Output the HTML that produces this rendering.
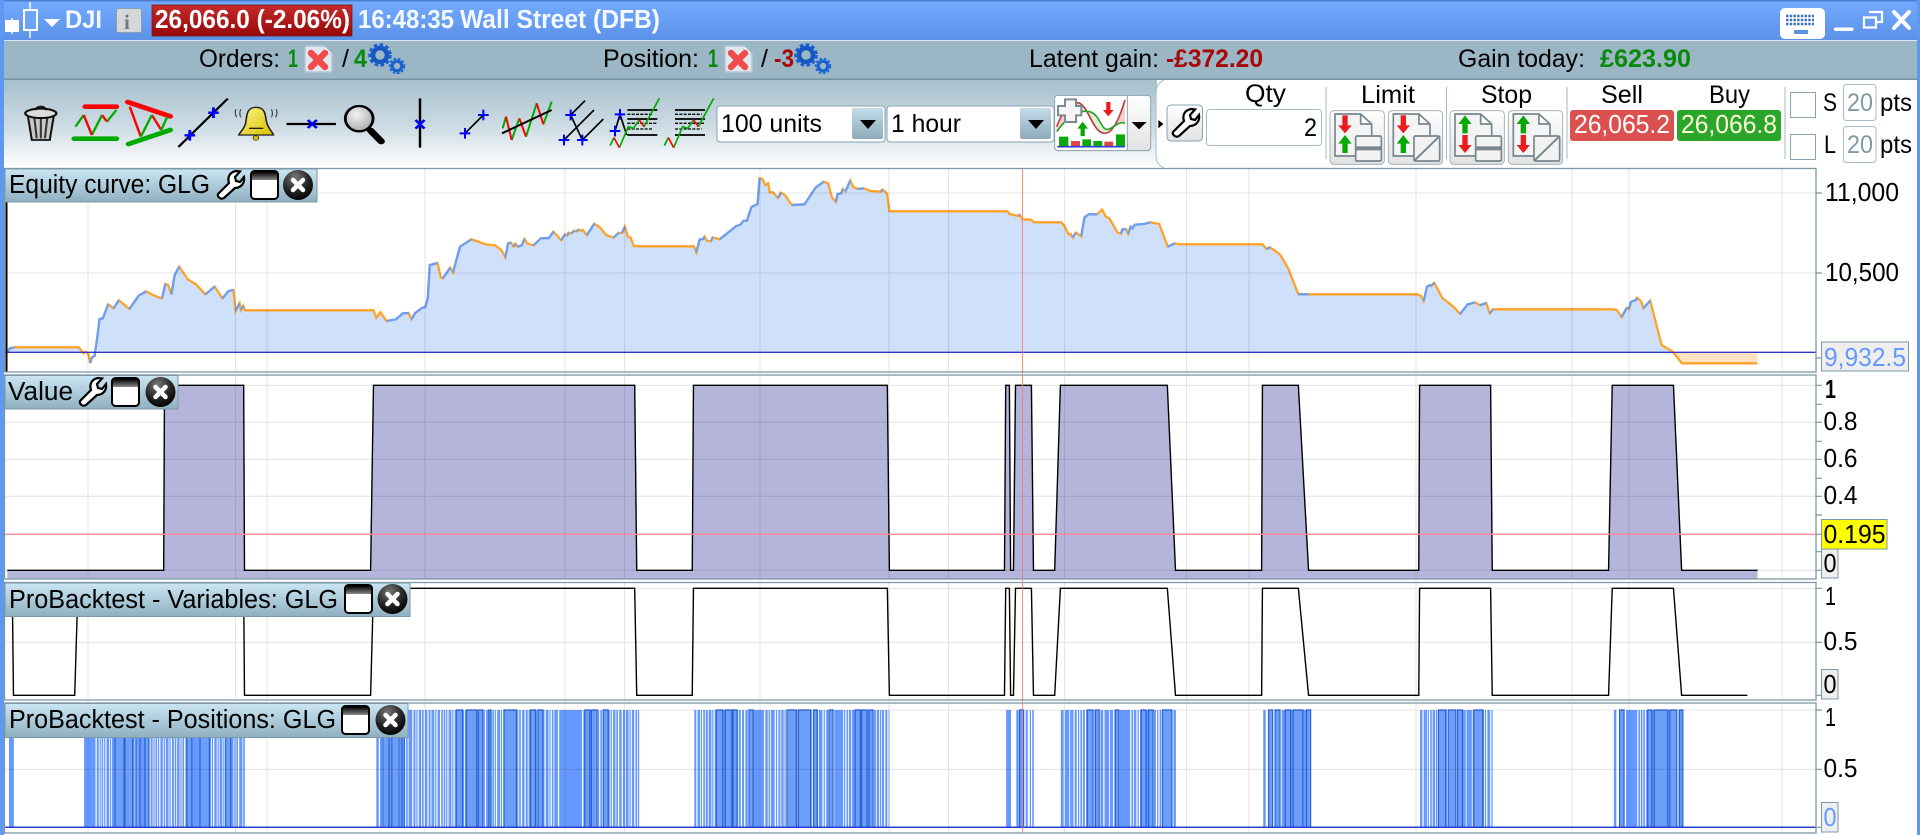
<!DOCTYPE html>
<html><head><meta charset="utf-8"><title>DJI</title>
<style>html,body{margin:0;padding:0;background:#fff;width:1920px;height:835px;overflow:hidden}svg{display:block}text{font-family:"Liberation Sans",sans-serif;fill:#000}.n{vector-effect:non-scaling-stroke;fill:none}</style></head><body>
<svg xmlns="http://www.w3.org/2000/svg" width="1920" height="835" viewBox="0 0 1920 835">
<defs>
<linearGradient id="tb" x1="0" y1="0" x2="0" y2="1"><stop offset="0" stop-color="#74abff"/><stop offset="1" stop-color="#5b92e8"/></linearGradient>
<linearGradient id="tool" x1="0" y1="0" x2="0" y2="1"><stop offset="0" stop-color="#a6c0cd"/><stop offset=".55" stop-color="#cfdde4"/><stop offset="1" stop-color="#fff"/></linearGradient>
<linearGradient id="lab" x1="0" y1="0" x2="0" y2="1"><stop offset="0" stop-color="#cbe6f3"/><stop offset="1" stop-color="#8fb0c1"/></linearGradient>
<linearGradient id="red" x1="0" y1="0" x2="0" y2="1"><stop offset="0" stop-color="#c82a2a"/><stop offset="1" stop-color="#960808"/></linearGradient>
<linearGradient id="btn" x1="0" y1="0" x2="0" y2="1"><stop offset="0" stop-color="#fff"/><stop offset="1" stop-color="#e2e2e2"/></linearGradient>
<linearGradient id="ddb" x1="0" y1="0" x2="0" y2="1"><stop offset="0" stop-color="#c2dcea"/><stop offset="1" stop-color="#8fabba"/></linearGradient>
<linearGradient id="wt" x1="0" y1="0" x2="0" y2="1"><stop offset="0" stop-color="#000"/><stop offset="1" stop-color="#888"/></linearGradient>
<radialGradient id="xg" cx=".4" cy=".25" r=".8"><stop offset="0" stop-color="#777"/><stop offset=".6" stop-color="#222"/><stop offset="1" stop-color="#000"/></radialGradient>
<linearGradient id="bell" x1="0" y1="0" x2="1" y2="1"><stop offset="0" stop-color="#fff48a"/><stop offset="1" stop-color="#d8c000"/></linearGradient>
<radialGradient id="lens" cx=".4" cy=".35" r=".7"><stop offset="0" stop-color="#f4f4f4"/><stop offset="1" stop-color="#a8a8a8"/></radialGradient>
<g id="win"><rect x="1" y="1" width="27" height="28" rx="3.5" fill="#fff" stroke="#000" stroke-width="2"/><rect x="2" y="2" width="25" height="8" fill="url(#wt)"/></g>
<g id="xc"><ellipse cx="15" cy="15" rx="15" ry="15" fill="url(#xg)"/><path d="M10 10L20 20M20 10L10 20" stroke="#fff" stroke-width="4.5" stroke-linecap="round"/></g>
<path id="wr" d="M3 24L14 13C12 7 15 2 21 1L25 1.500L20 7L21 11L25 12L29 7C30 13 26 18 20 18L9 28C6 30 2 27 3 24Z" fill="#fff" stroke="#000" stroke-width="2.200"/>
<g id="gear"><circle cx="11" cy="11" r="7" fill="none" stroke="#1556c0" stroke-width="4.500"/><circle cx="11" cy="11" r="10" fill="none" stroke="#1a5fcc" stroke-width="3.500" stroke-dasharray="3.500 2.300"/><circle cx="28" cy="22" r="4.800" fill="none" stroke="#1a62d0" stroke-width="3.200"/><circle cx="28" cy="22" r="7" fill="none" stroke="#1f6ad8" stroke-width="2.500" stroke-dasharray="2.500 1.700"/></g>
<g id="docx"><path d="M1 2.500Q1 1 2.500 1H20L28 9V25.500Q28 27 26.500 27H2.500Q1 27 1 25.500Z" fill="#e0e8ee" stroke="#b4c6d4" stroke-width="1.500"/><path d="M20 1V9H28" fill="#fff" stroke="#b4c6d4"/><path d="M7 8L21 22M21 8L7 22" stroke="#f24a4a" stroke-width="6.500" stroke-linecap="round"/></g>
<path id="dn" d="M-8 0H8V30H20L0 54L-20 30H-8Z" fill="#ec1c1c"/>
<path id="up" d="M0 0L20 26H8V54H-8V26H-20Z" fill="#06a806"/>
<g id="doc"><rect x="30" y="32" width="163" height="161" rx="12" fill="url(#btn)" stroke="#9aa6ac" stroke-width="2.500"/><path d="M106 168H45V42H122L155 72V106M122 42V72H155" fill="#f4f4f4" stroke="#77858c" stroke-width="5"/></g>
<g id="box1"><rect x="107" y="108" width="77" height="75" rx="4" fill="#f2f2f2" stroke="#77858c" stroke-width="5"/><path d="M107 145H184" stroke="#77858c" stroke-width="12"/></g>
<g id="box2"><rect x="282" y="108" width="77" height="75" rx="4" fill="#f2f2f2" stroke="#77858c" stroke-width="5"/><path d="M284 181L357 110" stroke="#77858c" stroke-width="6"/></g>
<path id="pl" d="M-16 0H16M0-16V16" stroke="#00f" stroke-width="6" fill="none"/>
</defs>

<rect width="1920" height="835" fill="#fff"/>
<!-- frame -->
<rect x="0" y="0" width="1920" height="40" fill="url(#tb)"/>
<rect x="0" y="0" width="1920" height="1.500" fill="#4b7fd0"/>
<rect x="0" y="0" width="4" height="835" fill="#5f98f2"/>
<rect x="1917" y="0" width="3" height="835" fill="#5f98f2"/>
<rect x="4" y="40" width="1913" height="1" fill="#dbe8f4"/>
<rect x="4" y="41" width="1913" height="38" fill="#9bb6c4"/>
<rect x="4" y="78.500" width="1913" height="1.500" fill="#76939f"/>
<rect x="4" y="80" width="1153" height="88" fill="url(#tool)"/>
<path d="M1164 80C1156 84 1156 90 1156 96V152C1156 160 1156 164 1164 168H1917V80Z" fill="#fff"/>
<path d="M1164 80C1156 84 1156 90 1156 96V152C1156 160 1156 164 1164 168" fill="none" stroke="#a6bcc8"/>

<!-- title bar -->
<path d="M12 18V34" stroke="#fff" stroke-width="1.500"/><rect x="5" y="20" width="14" height="12" fill="#fff"/>
<path d="M30 2V38" stroke="#fff" stroke-width="1.500"/><rect x="24" y="10" width="13" height="20" fill="#6ea4f8" stroke="#fff" stroke-width="2"/>
<path d="M44 19H60L52 27Z" fill="#fff"/>
<text x="65" y="28" font-size="25" font-weight="bold" textLength="37" lengthAdjust="spacingAndGlyphs" style="fill:#f4f8ff">DJI</text>
<rect x="116.500" y="8.500" width="25" height="24" rx="2" fill="#d4d8da" stroke="#8aa0ae"/><text x="124" y="29" font-size="21" font-weight="bold" style="fill:#777;font-family:'Liberation Serif',serif">i</text>
<rect x="152" y="5" width="200" height="31" fill="url(#red)" stroke="#7d1a1a" stroke-width=".8"/>
<text x="155" y="28" font-size="25.500" font-weight="bold" textLength="195" lengthAdjust="spacingAndGlyphs" style="fill:#fff">26,066.0 (-2.06%)</text>
<text x="358" y="28" font-size="25.500" font-weight="bold" textLength="96" lengthAdjust="spacingAndGlyphs" style="fill:#f4f8ff">16:48:35</text>
<text x="460" y="28" font-size="25.500" font-weight="bold" textLength="200" lengthAdjust="spacingAndGlyphs" style="fill:#f4f8ff">Wall Street (DFB)</text>
<rect x="1780" y="8" width="45" height="31" rx="5" fill="#fff"/>
<path d="M1786 16h28M1786 20h28M1786 24h28" stroke="#3f72bc" stroke-width="2.600" stroke-dasharray="2.500 1.200"/><rect x="1794" y="30" width="14" height="4" fill="#5b92dd"/>
<rect x="1834" y="27.500" width="19.500" height="3.500" rx="1.500" fill="#fff"/>
<path d="M1869 12h13v10h-5M1864 17.500h12v10h-12z" fill="none" stroke="#fff" stroke-width="2.200"/>
<path d="M1894 12L1909 28M1909 12L1894 28" stroke="#fff" stroke-width="4" stroke-linecap="round"/>

<!-- orders bar -->
<g font-size="25">
<text x="199" y="67" textLength="81" lengthAdjust="spacingAndGlyphs">Orders:</text>
<text x="288" y="67" font-weight="bold" textLength="10" lengthAdjust="spacingAndGlyphs" style="fill:#0a8a0a">1</text>
<use href="#docx" x="304" y="45"/>
<text x="342" y="67">/</text>
<text x="354" y="67" font-weight="bold" textLength="13" lengthAdjust="spacingAndGlyphs" style="fill:#0a8a0a">4</text>
<use href="#gear" x="369" y="44"/>
<text x="603" y="67" textLength="96" lengthAdjust="spacingAndGlyphs">Position:</text>
<text x="708" y="67" font-weight="bold" textLength="10" lengthAdjust="spacingAndGlyphs" style="fill:#0a8a0a">1</text>
<use href="#docx" x="724" y="45"/>
<text x="761" y="67">/</text>
<text x="774" y="67" font-weight="bold" textLength="20" lengthAdjust="spacingAndGlyphs" style="fill:#a80808">-3</text>
<use href="#gear" x="795" y="44"/>
<text x="1029" y="67" textLength="130" lengthAdjust="spacingAndGlyphs">Latent gain:</text>
<text x="1166" y="67" font-weight="bold" textLength="97" lengthAdjust="spacingAndGlyphs" style="fill:#a80808">-£372.20</text>
<text x="1458" y="67" textLength="127" lengthAdjust="spacingAndGlyphs">Gain today:</text>
<text x="1600" y="67" font-weight="bold" textLength="91" lengthAdjust="spacingAndGlyphs" style="fill:#0a8a0a">£623.90</text>
</g>

<!-- left toolbar icons in zoom coords -->
<g transform="scale(.40816 .33333)">
<path d="M68 345L78 420H122L132 345Z" fill="#c8c8c8" stroke="#111" stroke-width="5"/>
<path d="M84 352L90 415M100 352V415M116 352L110 415" stroke="#333" stroke-width="5"/>
<ellipse cx="100" cy="340" rx="38" ry="14" fill="#ddd" stroke="#111" stroke-width="6"/>
<path d="M85 330Q100 310 115 330" fill="none" stroke="#111" stroke-width="6"/>
<path d="M209 320H285" stroke="#f00" stroke-width="14" stroke-linecap="round"/>
<path d="M182 416H285" stroke="#0a0" stroke-width="14" stroke-linecap="round"/>
<path d="M185 380L205 345M225 405L250 345M262 365L285 330" stroke="#0a0" stroke-width="6" fill="none"/>
<path d="M205 345L225 405M250 345L262 365" stroke="#f00" stroke-width="6" fill="none"/>
<path d="M313 306L417 349" stroke="#f00" stroke-width="14" stroke-linecap="round"/>
<path d="M315 432L417 390" stroke="#0a0" stroke-width="14" stroke-linecap="round"/>
<path d="M318 320L345 410M372 345L395 390" stroke="#f00" stroke-width="6" fill="none"/>
<path d="M345 410L372 345M395 390L410 350" stroke="#0a0" stroke-width="6" fill="none"/>
<path d="M437 441L558 296" stroke="#000" stroke-width="6"/>
<path d="M510 338H536M523 322V354M452 406H478M465 390V422" stroke="#00f" stroke-width="7"/>
<path d="M627 322C650 322 650 345 652 360C655 385 668 395 670 405H585C588 395 602 385 603 360C605 345 605 322 627 322Z" fill="url(#bell)" stroke="#222" stroke-width="4"/>
<path d="M610 385H645" stroke="#222" stroke-width="4"/><ellipse cx="627" cy="414" rx="7" ry="7" fill="#d8c000" stroke="#333" stroke-width="2"/>
<path d="M578 328Q574 340 580 352M590 328Q585 340 590 352M677 328Q681 340 675 352M665 328Q670 340 665 352" fill="none" stroke="#444" stroke-width="3"/>
<path d="M702 372H823" stroke="#000" stroke-width="7"/><path d="M754 360L776 384M776 360L754 384" stroke="#00f" stroke-width="7"/>
<path d="M908 392L934 424" stroke="#000" stroke-width="18" stroke-linecap="round"/>
<ellipse cx="880" cy="356" rx="34" ry="38" fill="url(#lens)" stroke="#000" stroke-width="7"/>
<path d="M1029 295V443" stroke="#000" stroke-width="6"/><path d="M1018 360L1040 386M1040 360L1018 386" stroke="#00f" stroke-width="7"/>
</g>
<g transform="translate(440 85) scale(.33333)" fill="none">
<path d="M75 145L130 90" stroke="#000" stroke-width="5"/><use href="#pl" x="75" y="145"/><use href="#pl" x="130" y="90"/>
<path d="M188 130L198 95M215 165L238 100M258 155L290 55M310 118L335 50" stroke="#0a0" stroke-width="6"/>
<path d="M198 95L215 165M238 100L258 155M290 55L310 118" stroke="#f00" stroke-width="6"/>
<path d="M186 145L335 75" stroke="#000" stroke-width="6"/>
<path d="M392 90L435 47M372 165L462 75M427 165L490 102M392 90L427 165" stroke="#000" stroke-width="5"/>
<use href="#pl" x="392" y="90"/><use href="#pl" x="372" y="165"/><use href="#pl" x="427" y="165"/>
<path d="M562 75H652M562 102H652M562 150H652M525 138L540 88L560 150" stroke="#000" stroke-width="5"/>
<path d="M562 88H640M562 115H652M562 132H640" stroke="#000" stroke-width="4" stroke-dasharray="9 4"/>
<path d="M510 182L522 158M538 188L565 125L580 130L598 105M612 125L658 40" stroke="#0a0" stroke-width="5"/>
<path d="M522 158L538 188M598 105L612 125" stroke="#f00" stroke-width="5"/>
<use href="#pl" x="540" y="88"/><use href="#pl" x="525" y="138"/>
<path d="M705 75H795M705 102H795M705 150H795" stroke="#000" stroke-width="5"/>
<path d="M705 88H785M705 115H795M705 132H785" stroke="#000" stroke-width="4" stroke-dasharray="9 4"/>
<path d="M673 182L685 158M701 188L728 125L743 130L761 105M775 125L821 40" stroke="#0a0" stroke-width="5"/>
<path d="M685 158L701 188M761 105L775 125" stroke="#f00" stroke-width="5"/>
</g>

<!-- dropdowns -->
<rect x="717" y="106" width="168" height="36" rx="3" fill="#fff" stroke="#8ba3b0"/>
<rect x="852" y="108" width="31" height="31" rx="2" fill="url(#ddb)"/><path d="M860 120H876L868 129Z" fill="#000"/>
<text x="721" y="132" font-size="25" textLength="101" lengthAdjust="spacingAndGlyphs">100 units</text>
<rect x="887" y="106" width="167" height="36" rx="3" fill="#fff" stroke="#8ba3b0"/>
<rect x="1020" y="108" width="31" height="31" rx="2" fill="url(#ddb)"/><path d="M1028 120H1044L1036 129Z" fill="#000"/>
<text x="891" y="132" font-size="25" textLength="70" lengthAdjust="spacingAndGlyphs">1 hour</text>

<!-- indicator button -->
<g transform="translate(1050 90) scale(.33333)">
<rect x="14" y="16" width="288" height="166" rx="9" fill="url(#btn)" stroke="#8ba3b0" stroke-width="3"/>
<rect x="16" y="18" width="216" height="162" rx="8" fill="#fff"/>
<path d="M232 16V182" stroke="#8ba3b0" stroke-width="3"/>
<path d="M20 110C40 60 60 30 90 40C120 60 130 130 165 130C190 130 210 80 225 30V100C215 95 205 100 190 110C160 140 160 80 120 65C90 60 60 70 20 125Z" fill="#dff0d8"/>
<path d="M20 110C40 60 60 30 90 40L100 65C80 60 50 75 20 125ZM190 110C205 100 215 95 225 100V30C210 80 200 100 190 110Z" fill="#f6cfcf"/>
<path d="M20 110C40 60 60 30 90 40C120 60 130 130 165 130C190 130 210 80 225 30" fill="none" stroke="#b84040" stroke-width="5"/>
<path d="M20 125C60 70 90 60 120 65C160 80 150 140 190 110C205 100 215 95 225 100" fill="none" stroke="#2aa02a" stroke-width="5"/>
<path d="M45 28H78V48H94V76H78V96H45V76H24V48H45Z" fill="#f6f6f6" stroke="#7b8b94" stroke-width="6"/>
<use href="#up" transform="translate(98 95) scale(.8)"/><use href="#dn" transform="translate(175 36) scale(.8)"/>
<path d="M27 140h28v28h-28zM97 148h26v20h-26zM130 153h27v15h-27zM198 133h27v35h-27z" fill="#0ca80c"/>
<path d="M63 153h27v15h-27zM163 155h27v13h-27z" fill="#e04848"/>
<path d="M22 170H225" stroke="#2a3fd8" stroke-width="5"/>
<path d="M245 96H290L267 118Z" fill="#000"/>
<path d="M325 90L340 102L325 115Z" fill="#000"/>
</g>

<!-- right panel -->
<rect x="1167" y="105" width="35.500" height="36" rx="4" fill="url(#btn)" stroke="#8ba3b0"/>
<use href="#wr" transform="translate(1170 108)"/>
<rect x="1206.500" y="109.500" width="115" height="36" rx="3" fill="#fff" stroke="#a8bac4"/>
<g stroke="#a8bac4"><path d="M1326 87V159M1446.500 87V159M1567 87V159M1785 87V159"/></g>
<g font-size="25">
<text x="1245" y="102" textLength="41" lengthAdjust="spacingAndGlyphs">Qty</text>
<text x="1304" y="136" textLength="13" lengthAdjust="spacingAndGlyphs">2</text>
<text x="1361" y="103" textLength="54" lengthAdjust="spacingAndGlyphs">Limit</text>
<text x="1481" y="103" textLength="51" lengthAdjust="spacingAndGlyphs">Stop</text>
<text x="1601" y="103" textLength="42" lengthAdjust="spacingAndGlyphs">Sell</text>
<text x="1709" y="103" textLength="41" lengthAdjust="spacingAndGlyphs">Buy</text>
</g>
<g transform="translate(1320 100) scale(.33333)">
<use href="#doc"/><use href="#box1"/><use href="#dn" transform="translate(75 46)"/><use href="#up" transform="translate(75 105)"/>
<g transform="translate(175 0)"><use href="#doc"/></g><use href="#box2"/><use href="#dn" transform="translate(250 46)"/><use href="#up" transform="translate(250 105)"/>
<g transform="translate(360 0)"><use href="#doc"/><use href="#box1"/><use href="#up" transform="translate(75 46)"/><use href="#dn" transform="translate(75 105)"/></g>
<g transform="translate(535 0)"><use href="#doc"/><use href="#box2" transform="translate(-175 0)"/><use href="#up" transform="translate(75 46)"/><use href="#dn" transform="translate(75 105)"/></g>
</g>
<rect x="1570" y="110" width="104" height="31" rx="3" fill="#dc5050"/>
<text x="1574" y="133" font-size="25.500" textLength="96" lengthAdjust="spacingAndGlyphs" style="fill:#fff">26,065.2</text>
<rect x="1677" y="110" width="104" height="31" rx="3" fill="#2aa62a"/>
<text x="1681" y="133" font-size="25.500" textLength="96" lengthAdjust="spacingAndGlyphs" style="fill:#fdfdd8">26,066.8</text>
<rect x="1790.500" y="92.500" width="25" height="25" fill="#fff" stroke="#8ba3b0"/>
<rect x="1790.500" y="134.500" width="25" height="25" fill="#fff" stroke="#8ba3b0"/>
<rect x="1843.500" y="84.500" width="32.500" height="36" rx="3" fill="#fff" stroke="#a8bac4"/>
<rect x="1843.500" y="126.500" width="32.500" height="36" rx="3" fill="#fff" stroke="#a8bac4"/>
<g font-size="25">
<text x="1823" y="111" textLength="14" lengthAdjust="spacingAndGlyphs">S</text><text x="1824" y="153" textLength="12" lengthAdjust="spacingAndGlyphs">L</text>
<text x="1847" y="111" textLength="26" lengthAdjust="spacingAndGlyphs" style="fill:#7f9aa4">20</text>
<text x="1847" y="153" textLength="26" lengthAdjust="spacingAndGlyphs" style="fill:#7f9aa4">20</text>
<text x="1880" y="111" textLength="32" lengthAdjust="spacingAndGlyphs">pts</text>
<text x="1880" y="153" textLength="32" lengthAdjust="spacingAndGlyphs">pts</text>
</g>

<!-- equity -->
<g transform="translate(0 165) scale(.40816 .33333)">
<path fill="#cfe0fb" d="M18 562L24 550L35 547L193 547L205 562H238L244 462L252 460L265 418L278 430L291 406L317 432L340 392L358 379L378 392L397 400L405 357L412 360L420 388L428 330L439 305L460 343L480 358L503 388L526 365L545 400L560 378L572 375L577 438L587 415L590 435L596 422L600 436L915 436L922 458L932 442L947 468L970 463L987 445L1001 444L1008 463L1018 443L1035 428L1042 426L1048 400L1053 300L1072 294L1080 338L1085 340L1103 308L1110 322L1127 245L1155 223L1190 238L1213 241L1228 255L1238 277L1245 235L1252 233L1258 245L1263 236L1268 245L1278 241L1285 222L1292 236L1307 241L1325 220L1345 219L1356 200L1375 226L1384 208L1390 212L1393 203L1400 205L1407 197L1412 199L1418 194L1422 197L1428 195L1438 210L1456 176L1470 187L1485 210L1503 218L1515 204L1524 204L1531 185L1538 215L1545 218L1553 243L1568 244V562Z"/>
<path class="n" stroke="#ffa227" stroke-width="2.300" vector-effect="non-scaling-stroke" d="M18 562L24 550L35 547L193 547L205 565L210 560L216 565L221 594L225 578L232 572L238 520L244 462L252 460L265 418L278 430L291 406L317 432L340 392L358 379L378 392L397 400L405 357L412 360L420 388L428 330L439 305L460 343L480 358L503 388L526 365L545 400L560 378L572 375L577 438L587 415L590 435L596 422L600 436L915 436L922 458L932 442L947 468L970 463L987 445L1001 444L1008 463L1018 443L1035 428L1042 426L1048 400L1053 300L1072 294L1080 338L1085 340L1103 308L1110 322L1127 245L1155 223L1190 238L1213 241L1228 255L1238 277L1245 235L1252 233L1258 245L1263 236L1268 245L1278 241L1285 222L1292 236L1307 241L1325 220L1345 219L1356 200L1375 226L1384 208L1390 212L1393 203L1400 205L1407 197L1412 199L1418 194L1422 197L1428 195L1438 210L1456 176L1470 187L1485 210L1503 218L1515 204L1524 204L1531 185L1538 215L1545 218L1553 243L1568 244"/>
<path class="n" stroke="#6a9ff5" stroke-width="2.300" vector-effect="non-scaling-stroke" d="M18 562L24 550L35 547M221 594L225 578L232 572L238 520L244 462L252 460L265 418M278 430L291 406M317 432L340 392L358 379M397 400L405 357M420 388L428 330L439 305M503 388L526 365M545 400L560 378L572 375M577 438L587 415M590 435L596 422M947 468L970 463L987 445L1001 444M1008 463L1018 443L1035 428L1042 426L1048 400L1053 300L1072 294M1085 340L1103 308M1110 322L1127 245L1155 223M1238 277L1245 235L1252 233M1258 245L1263 236M1268 245L1278 241L1285 222M1307 241L1325 220L1345 219L1356 200M1375 226L1384 208M1390 212L1393 203M1400 205L1407 197M1412 199L1418 194M1438 210L1456 176M1503 218L1515 204M1524 204L1531 185"/>
</g>
<g transform="translate(640 165) scale(.40816 .33333)">
<path fill="#cfe0fb" d="M0 244L132 244L138 262L146 224L155 222L158 215L163 226L174 229L178 217L195 223L235 184L247 178L254 167L262 167L273 126L288 117L293 40L300 42L307 60L314 55L318 82L326 82L338 99L345 83L355 90L372 120L403 118L430 68L450 50L461 55L470 97L480 111L484 87L493 85L497 72L503 79L508 67L515 47L522 65L533 72L548 70L565 78L590 80L594 74L605 85L611 139L900 139L905 147L927 153L930 149L937 163L958 164L965 172L1032 172L1040 183L1050 208L1055 207L1060 218L1068 203L1081 214L1089 157L1100 148L1120 148L1132 134L1142 156L1150 160L1170 203L1178 206L1182 193L1191 193L1196 206L1202 185L1207 190L1212 179L1235 177L1251 172L1272 177L1293 245L1310 235L1322 238L1525 238L1535 252L1543 247L1568 268V562H0Z"/>
<path class="n" stroke="#ffa227" stroke-width="2.300" vector-effect="non-scaling-stroke" d="M0 244L132 244L138 262L146 224L155 222L158 215L163 226L174 229L178 217L195 223L235 184L247 178L254 167L262 167L273 126L288 117L293 40L300 42L307 60L314 55L318 82L326 82L338 99L345 83L355 90L372 120L403 118L430 68L450 50L461 55L470 97L480 111L484 87L493 85L497 72L503 79L508 67L515 47L522 65L533 72L548 70L565 78L590 80L594 74L605 85L611 139L900 139L905 147L927 153L930 149L937 163L958 164L965 172L1032 172L1040 183L1050 208L1055 207L1060 218L1068 203L1081 214L1089 157L1100 148L1120 148L1132 134L1142 156L1150 160L1170 203L1178 206L1182 193L1191 193L1196 206L1202 185L1207 190L1212 179L1235 177L1251 172L1272 177L1293 245L1310 235L1322 238L1525 238L1535 252L1543 247L1568 268"/>
<path class="n" stroke="#6a9ff5" stroke-width="2.300" vector-effect="non-scaling-stroke" d="M138 262L146 224L155 222L158 215M174 229L178 217M195 223L235 184L247 178L254 167L262 167L273 126L288 117L293 40M338 99L345 83M372 120L403 118L430 68L450 50M480 111L484 87L493 85L497 72M503 79L508 67L515 47M533 72L548 70M590 80L594 74M927 153L930 149M1060 218L1068 203M1081 214L1089 157L1100 148L1120 148M1178 206L1182 193L1191 193M1196 206L1202 185L1207 190L1212 179L1235 177L1251 172M1293 245L1310 235M1535 252L1543 247"/>
</g>
<g transform="translate(1280 165) scale(.40816 .33333)">
<path fill="#cfe0fb" d="M0 268L20 310L45 388L335 388L345 392L352 408L360 365L368 360L370 363L378 353L397 398L425 425L441 447L460 418L478 412L490 421L505 414L514 445L522 433L815 433L825 435L837 456L850 428L855 432L860 410L872 405L875 398L885 410L890 430L907 407L935 540L962 560V562H0Z"/>
<path fill="#fde3c1" d="M962 562L985 595L1170 595V562Z"/>
<path class="n" stroke="#ffa227" stroke-width="2.300" vector-effect="non-scaling-stroke" d="M0 268L20 310L45 388L335 388L345 392L352 408L360 365L368 360L370 363L378 353L397 398L425 425L441 447L460 418L478 412L490 421L505 414L514 445L522 433L815 433L825 435L837 456L850 428L855 432L860 410L872 405L875 398L885 410L890 430L907 407L935 540L962 560L985 595L1170 595"/>
<path class="n" stroke="#6a9ff5" stroke-width="2.300" vector-effect="non-scaling-stroke" d="M45 388L70 388M352 408L360 365L368 360M370 363L378 353M441 447L460 418L478 412M490 421L505 414M514 445L522 433M837 456L850 428M855 432L860 410L872 405L875 398M890 430L907 407"/>
</g>
<path d="M5 352.300H1816" stroke="#3535c8" stroke-width="1.300"/>
<rect x="5.500" y="202" width="2" height="170" fill="#000"/>

<!-- value chart + positions fills -->
<g transform="translate(0 380) scale(.40816 .33333)">
<path fill="#b5b5dc" d="M18 598V571H401L403 16H597L599 571H908L915 16H1555L1560 571H1696L1699 16H2174L2179 571H2461L2464 16H2473L2476 571H2483L2488 16H2527L2532 571H2584L2598 16H2860L2880 571H3091L3093 16H3181L3206 571H3476L3478 16H3652L3656 571H3941L3950 16H4100L4120 571H4306V598Z"/>
<g fill="none" stroke="#6699ff" stroke-width="352">
<path d="M206 1166H600" stroke-dasharray="28 3 5 2 3 2 4 2 3 3 6 2 3 2 7 2 3 3 5 2 4 2 6 2 3 2 4 3 8 2 4 2"/>
<path d="M922 1166H1566" stroke-dasharray="6 3 5 2 7 2 3 3 6 3 4 2 4 2 3 3 7 2 3 3 4 2 9 3 5 2 3 3 6 2 4 3"/>
<path d="M1701 1166H2179" stroke-dasharray="5 3 6 2 3 3 4 2 5 2 7 2 3 3 4 3 6 2 4 2 9 3 3 3 5 2 6 2 3 2 5 3"/>
<path d="M2599 1166H2884" stroke-dasharray="7 3 11 2 8 3 5 3 3 3 4 2 5 3 6 2 3 3 4 2 6 3 3 3"/>
<path d="M3095 1166H3211" stroke-dasharray="6 7 10 6 12 4 13 6 24 9 10"/>
<path d="M3479 1166H3658" stroke-dasharray="6 3 8 2 3 3 4 2 6 2 3 3 7 3 3 2"/>
<path d="M3954 1166H4123" stroke-dasharray="6 8 11 5 27 3 4 2 4 2 4 3"/>
</g>
<path fill="#6699ff" d="M22 990H34V1342H22ZM2465 990H2477V1342H2465ZM2490 990H2496V1342H2490ZM2513 990H2518V1342H2513ZM2523 990H2526V1342H2523ZM2529 990H2533V1342H2529ZM3984 990H4011V1342H3984ZM2743 990H2768V1342H2743ZM1850 990H1868V1342H1850ZM2046 990H2065V1342H2046ZM3593 990H3606V1342H3593ZM1372 990H1425V1342H1372Z"/>
<path fill="#6d9ff8" stroke="#2a62d6" stroke-width="1.200" vector-effect="non-scaling-stroke" d="M282 990H304V1342H282ZM306 990H325V1342H306ZM333 990H343V1342H333ZM355 990H365V1342H355ZM458 990H470V1342H458ZM490 990H513V1342H490ZM553 990H565V1342H553ZM938 990H953V1342H938ZM960 990H978V1342H960ZM985 990H991V1342H985ZM1118 990H1133V1342H1118ZM1143 990H1168V1342H1143ZM1172 990H1183V1342H1172ZM1198 990H1203V1342H1198ZM1235 990H1265V1342H1235ZM1300 990H1312V1342H1300ZM1318 990H1330V1342H1318ZM1433 990H1445V1342H1433ZM1449 990H1463V1342H1449ZM1478 990H1490V1342H1478ZM1755 990H1771V1342H1755ZM1777 990H1793V1342H1777ZM1796 990H1806V1342H1796ZM1835 990H1845V1342H1835ZM1928 990H1951V1342H1928ZM1956 990H1986V1342H1956ZM1993 990H2002V1342H1993ZM2031 990H2041V1342H2031ZM2095 990H2108V1342H2095ZM2111 990H2124V1342H2111ZM2129 990H2139V1342H2129ZM2498 990H2508V1342H2498ZM2664 990H2678V1342H2664ZM2684 990H2693V1342H2684ZM2733 990H2741V1342H2733ZM2796 990H2808V1342H2796ZM2814 990H2825V1342H2814ZM2848 990H2871V1342H2848ZM3108 990H3118V1342H3108ZM3124 990H3136V1342H3124ZM3149 990H3162V1342H3149ZM3168 990H3192V1342H3168ZM3201 990H3211V1342H3201ZM3524 990H3542V1342H3524ZM3548 990H3567V1342H3548ZM3571 990H3583V1342H3571ZM3611 990H3633V1342H3611ZM3968 990H3979V1342H3968ZM4037 990H4047V1342H4037ZM4053 990H4086V1342H4053ZM4091 990H4108V1342H4091ZM4115 990H4123V1342H4115Z"/>
</g>

<!-- grid -->
<path d="M88 168V833M235.500 168V833M267 168V833M425 168V833M565 168V833M624.500 168V833M760 168V833M889 168V833M948.500 168V833M1064.500 168V833M1186.500 168V833M1249 168V833M1416 168V833M1572 168V833M1629 168V833M1782 168V833M5 193H1816M5 273H1816M5 385.300H1816M5 422.300H1816M5 459.300H1816M5 496.300H1816M5 570.300H1816M5 588.300H1816M5 642.300H1816M5 710H1816M5 769.300H1816" stroke="#000" stroke-opacity=".1" stroke-width="1.100"/>

<!-- signals -->
<g transform="translate(0 380) scale(.40816 .33333)" fill="none" stroke="#000">
<path class="n" stroke-width="1.400" vector-effect="non-scaling-stroke" d="M18 571H401L403 16H597L599 571H908L915 16H1555L1560 571H1696L1699 16H2174L2179 571H2461L2464 16H2473L2476 571H2483L2488 16H2527L2532 571H2584L2598 16H2860L2880 571H3091L3093 16H3181L3206 571H3476L3478 16H3652L3656 571H3941L3950 16H4100L4120 571H4306"/>
<path class="n" stroke-width="1.400" vector-effect="non-scaling-stroke" d="M30 625L33 946H183L191 625H597L599 946H908L915 625H1555L1560 946H1696L1699 625H2174L2179 946H2461L2464 625H2473L2476 946H2483L2488 625H2527L2532 946H2584L2598 625H2860L2880 946H3091L3093 625H3181L3206 946H3476L3478 625H3652L3656 946H3941L3950 625H4100L4120 946H4281"/>
</g>
<path d="M5 534.300H1816" stroke="#ff8a94" stroke-width="1.300"/>
<path d="M5 827.300H1816" stroke="#2a3fd0" stroke-width="1.500"/>

<!-- gaps & frames -->
<rect x="4" y="372" width="1813" height="3.500" fill="#fff"/>
<rect x="4" y="579" width="1813" height="3.500" fill="#fff"/>
<rect x="4" y="700" width="1813" height="3" fill="#fff"/>
<path d="M1022.500 168V833" stroke="#f77" stroke-opacity=".85" stroke-width="1"/>
<g fill="none" stroke="#7d98a6" stroke-width="1.300">
<rect x="4.500" y="168.500" width="1811.500" height="203.500"/>
<rect x="4.500" y="375" width="1811.500" height="204"/>
<rect x="4.500" y="582.500" width="1811.500" height="117.500"/>
<rect x="4.500" y="703" width="1811.500" height="130"/>
</g>
<path d="M1816 193h6M1816 273h6M1816 358h6M1816 385.300h6M1816 404.300h6M1816 422.300h6M1816 441.300h6M1816 459.300h6M1816 478.300h6M1816 496.300h6M1816 515h6M1816 534.300h6M1816 551.700h6M1816 570.300h6M1816 588.300h6M1816 642.300h6M1816 695.300h6M1816 710h6M1816 769.300h6M1816 827.300h6" stroke="#7d98a6" stroke-width="1.200"/>

<!-- panel labels -->
<rect x="5" y="169" width="312" height="33" fill="url(#lab)" stroke="#7d98a6"/>
<text x="9" y="193" font-size="25.500" textLength="201" lengthAdjust="spacingAndGlyphs">Equity curve: GLG</text>
<use href="#wr" x="215" y="170"/><use href="#win" x="250" y="170"/><use href="#xc" x="283" y="170"/>
<rect x="5" y="375.500" width="173" height="33.500" fill="url(#lab)" stroke="#7d98a6"/>
<text x="8" y="400" font-size="25.500" textLength="65" lengthAdjust="spacingAndGlyphs">Value</text>
<use href="#wr" x="77" y="377"/><use href="#win" x="111" y="377"/><use href="#xc" x="145.500" y="377"/>
<rect x="5" y="583" width="405" height="33.500" fill="url(#lab)" stroke="#7d98a6"/>
<text x="9" y="608" font-size="25.500" textLength="329" lengthAdjust="spacingAndGlyphs">ProBacktest - Variables: GLG</text>
<use href="#win" x="344" y="584"/><use href="#xc" x="377.500" y="584"/>
<rect x="5" y="703.500" width="403" height="34" fill="url(#lab)" stroke="#7d98a6"/>
<text x="9" y="728" font-size="25.500" textLength="327" lengthAdjust="spacingAndGlyphs">ProBacktest - Positions: GLG</text>
<use href="#win" x="341" y="705"/><use href="#xc" x="375.500" y="705"/>

<!-- axis labels -->
<g font-size="25.500">
<text x="1825" y="201" textLength="74" lengthAdjust="spacingAndGlyphs">11,000</text>
<text x="1825" y="281" textLength="74" lengthAdjust="spacingAndGlyphs">10,500</text>
<rect x="1821.500" y="342" width="87" height="29" fill="#eee" stroke="#7d98a6"/>
<text x="1824" y="366" textLength="82" lengthAdjust="spacingAndGlyphs" style="fill:#6699ff">9,932.5</text>
<text x="1825" y="398" font-weight="bold" textLength="11" lengthAdjust="spacingAndGlyphs">1</text>
<text x="1823.500" y="430" textLength="34" lengthAdjust="spacingAndGlyphs">0.8</text>
<text x="1823.500" y="467" textLength="34" lengthAdjust="spacingAndGlyphs">0.6</text>
<text x="1823.500" y="504" textLength="34" lengthAdjust="spacingAndGlyphs">0.4</text>
<rect x="1821.500" y="519.500" width="65.500" height="29.500" fill="#ff0" stroke="#7d98a6"/>
<text x="1823.500" y="543" textLength="62" lengthAdjust="spacingAndGlyphs">0.195</text>
<rect x="1821.500" y="549" width="16.500" height="29" fill="#eee" stroke="#7d98a6"/>
<text x="1823.500" y="572" textLength="13" lengthAdjust="spacingAndGlyphs">0</text>
<text x="1825" y="605" textLength="11" lengthAdjust="spacingAndGlyphs">1</text>
<text x="1823.500" y="650" textLength="34" lengthAdjust="spacingAndGlyphs">0.5</text>
<rect x="1821.500" y="669.500" width="16.500" height="29.500" fill="#eee" stroke="#7d98a6"/>
<text x="1823.500" y="693" textLength="13" lengthAdjust="spacingAndGlyphs">0</text>
<text x="1825" y="726" textLength="11" lengthAdjust="spacingAndGlyphs">1</text>
<text x="1823.500" y="777" textLength="34" lengthAdjust="spacingAndGlyphs">0.5</text>
<rect x="1821.500" y="802.500" width="16.500" height="29.500" fill="#eee" stroke="#7d98a6"/>
<text x="1823.500" y="826" textLength="13" lengthAdjust="spacingAndGlyphs" style="fill:#6699ff">0</text>
</g>
</svg>
</body></html>
